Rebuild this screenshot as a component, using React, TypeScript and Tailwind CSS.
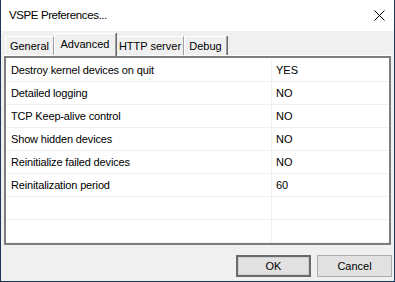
const ROWS: [string, string][] = [
  ['Destroy kernel devices on quit', 'YES'],
  ['Detailed logging', 'NO'],
  ['TCP Keep-alive control', 'NO'],
  ['Show hidden devices', 'NO'],
  ['Reinitialize failed devices', 'NO'],
  ['Reinitalization period', '60'],
  ['', ''],
  ['', ''],
]

const TABS = [
  { label: 'General', w: 'w-[49px]' },
  { label: 'Advanced', w: 'w-[62px]', active: true },
  { label: 'HTTP server', w: 'w-[68px]' },
  { label: 'Debug', w: 'w-[43px]' },
]

function CloseIcon() {
  return (
    <svg width="11" height="11" viewBox="0 0 11 11" className="block">
      <path d="M0.5 0.5 L10.5 10.5 M10.5 0.5 L0.5 10.5" stroke="#000" strokeWidth="1" />
    </svg>
  )
}

export default function App() {
  return (
    <div className="flex h-[282px] w-[395px] flex-col border-x border-b border-[#1b3656] bg-[#f0f0f0] font-['Liberation_Sans',Arial,sans-serif] text-[11px] text-black">
      {/* title bar */}
      <div className="flex h-[31px] shrink-0 items-center justify-between bg-white pl-[8px] pr-[9px]">
        <span className="text-[11.5px] tracking-[-0.4px]">VSPE Preferences...</span>
        <CloseIcon />
      </div>

      {/* tabs */}
      <div className="flex h-[24px] shrink-0 items-end pl-[4px]">
        {TABS.map((t) =>
          t.active ? (
            <div
              key={t.label}
              className={`${t.w} relative z-10 -mb-px flex h-[23px] items-start justify-center border-l border-t border-r border-l-white border-t-white border-r-[#a0a0a0] bg-[#f0f0f0] pt-[2px] shadow-[1px_0_0_#696969]`}
            >
              {t.label}
            </div>
          ) : (
            <div
              key={t.label}
              className={`${t.w} flex h-[19px] items-center justify-center border-l border-t border-r border-l-white border-t-white border-r-[#a0a0a0] pt-px shadow-[1px_0_0_#696969]`}
            >
              {t.label}
            </div>
          ),
        )}
      </div>

      {/* list */}
      <div className="mx-[3px] h-[190px] shrink-0 border-t border-white">
        <div className="h-full overflow-hidden border-2 border-[#7d7d7d] bg-white pt-px">
          {ROWS.map(([k, v], i) => (
            <div key={i} className="grid h-[23px] grid-cols-[266px_1fr] border-b border-[#f0f0f0]">
              <div className="flex items-center border-r border-[#f0f0f0] pl-[5px] tracking-[-0.15px]">{k}</div>
              <div className="flex items-center pl-[4px]">{v}</div>
            </div>
          ))}
        </div>
      </div>

      {/* buttons */}
      <div className="flex justify-end gap-[6px] pr-[2px] pt-[10px]">
        <button className="h-[22px] w-[75px] border-2 border-[#6a6a6a] bg-[#e1e1e1] shadow-[inset_0_0_0_1px_#cfcfcf]">
          OK
        </button>
        <button className="h-[22px] w-[75px] border border-[#adadad] bg-[#e1e1e1]">Cancel</button>
      </div>
    </div>
  )
}
